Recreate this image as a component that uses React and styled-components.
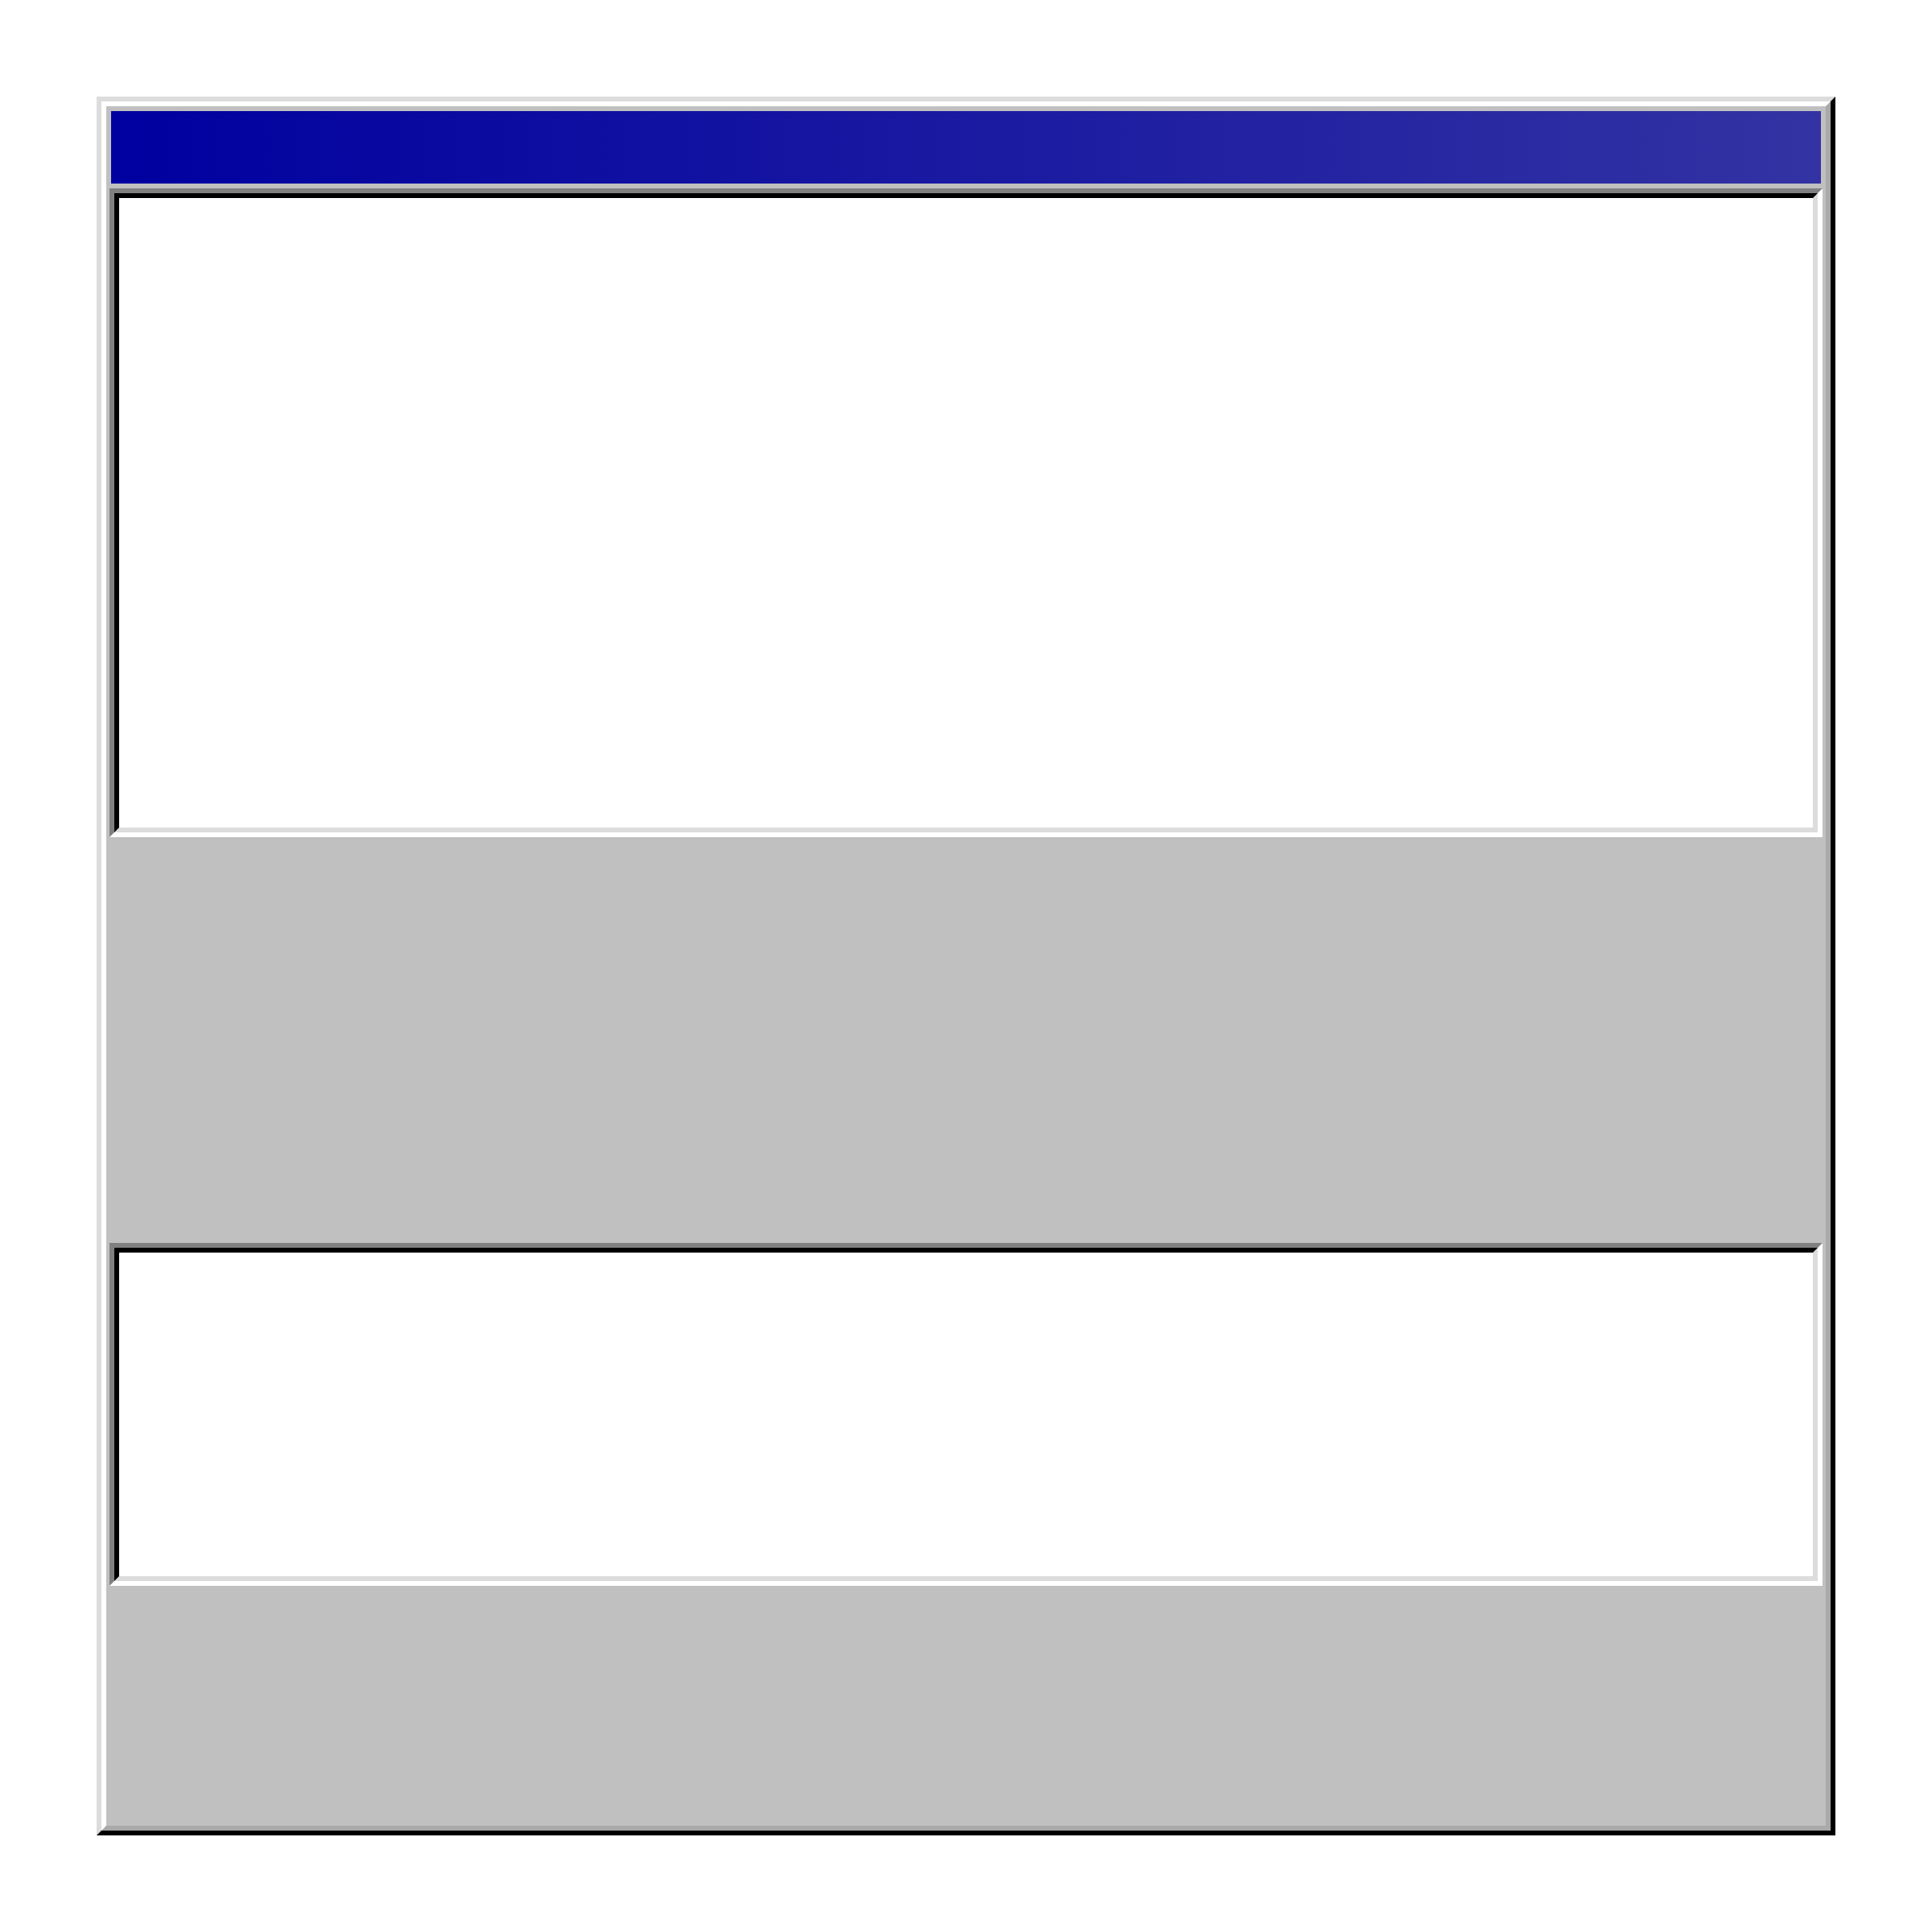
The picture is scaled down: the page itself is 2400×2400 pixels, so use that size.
import React from 'react';
import styled, { createGlobalStyle } from 'styled-components';

const GlobalStyle = createGlobalStyle`
  html, body {
    margin: 0;
    padding: 0;
    background: #ffffff;
    font-family: "Liberation Sans", Arial, sans-serif;
  }
`;

const Page = styled.div`
  padding: 120px;
`;

// raised window edge: light outer bevel, then a white / grey inner bevel
const Window = styled.div`
  width: 2160px;
  height: 2160px;
  box-sizing: border-box;
  border: 6px solid;
  border-color: #dcdcdc #000000 #000000 #dcdcdc;
`;

const WindowBody = styled.div`
  height: 100%;
  box-sizing: border-box;
  border: 6px solid;
  border-color: #ffffff #a9a9a9 #a9a9a9 #ffffff;
  background: #c0c0c0;
  display: flex;
  flex-direction: column;
`;

const TitleBar = styled.div`
  height: 90px;
  margin: 6px 6px 0;
  background: linear-gradient(to right, #0000a0, #3333a3);
  flex-shrink: 0;
`;

// sunken field: dark outer bevel, black inner bevel
const Field = styled.div`
  height: ${(p) => p.$height}px;
  margin: ${(p) => p.$top}px 4px 0;
  box-sizing: border-box;
  border: 6px solid;
  border-color: #808080 #ffffff #ffffff #808080;
  flex-shrink: 0;
`;

const FieldInner = styled.div`
  height: 100%;
  box-sizing: border-box;
  border: 6px solid;
  border-color: #000000 #dcdcdc #dcdcdc #000000;
  background: #ffffff;
`;

const App = () => (
  <>
    <GlobalStyle />
    <Page>
      <Window>
        <WindowBody>
          <TitleBar />
          <Field $height={806} $top={6}>
            <FieldInner />
          </Field>
          <Field $height={426} $top={504}>
            <FieldInner />
          </Field>
        </WindowBody>
      </Window>
    </Page>
  </>
);

export default App;
